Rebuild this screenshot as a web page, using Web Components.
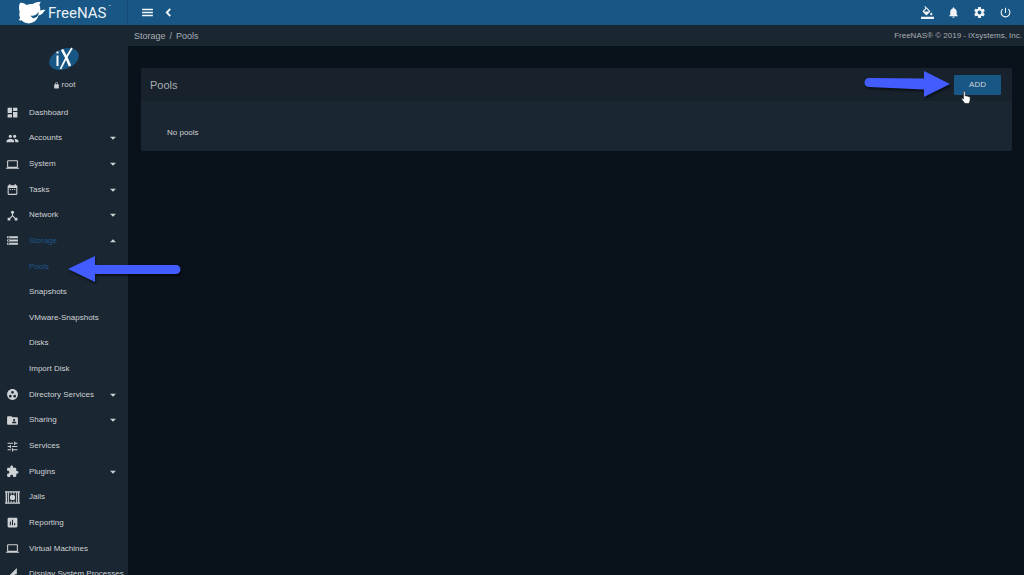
<!DOCTYPE html>
<html lang="en">
<head>
<meta charset="utf-8">
<title>FreeNAS - Pools</title>
<style>
  html { --blue: #175685; --panel: #1a2631; --panel-head: #17222c; --page: #09111a; --text: #cfd2d5; --dim: #a9adb1; }
  body { margin: 0; background: var(--page); color: var(--text); font-family: "Liberation Sans", Arial, sans-serif; font-size: 8px; line-height: 12px; overflow: hidden; }
</style>
</head>
<body>
<nas-app></nas-app>
<script>
const PATHS = {
  dashboard: 'M3 13h8V3H3v10zm0 8h8v-6H3v6zm10 0h8V11h-8v10zm0-18v6h8V3h-8z',
  people: 'M16 11c1.66 0 2.99-1.34 2.99-3S17.66 5 16 5c-1.66 0-3 1.34-3 3s1.34 3 3 3zm-8 0c1.66 0 2.99-1.34 2.99-3S9.66 5 8 5C6.34 5 5 6.34 5 8s1.34 3 3 3zm0 2c-2.33 0-7 1.17-7 3.5V19h14v-2.5c0-2.33-4.67-3.5-7-3.5zm8 0c-.29 0-.62.02-.97.05 1.16.84 1.97 1.97 1.97 3.45V19h6v-2.5c0-2.33-4.67-3.5-7-3.5z',
  laptop: 'M20 18c1.1 0 1.99-.9 1.99-2L22 6c0-1.1-.9-2-2-2H4c-1.1 0-2 .9-2 2v10c0 1.1.9 2 2 2H0v2h24v-2h-4zM4 6h16v10H4V6z',
  calendar: 'M9 11H7v2h2v-2zm4 0h-2v2h2v-2zm4 0h-2v2h2v-2zm2-7h-1V2h-2v2H8V2H6v2H5c-1.11 0-1.99.9-1.99 2L3 20c0 1.1.89 2 2 2h14c1.1 0 2-.9 2-2V6c0-1.1-.9-2-2-2zm0 16H5V9h14v11z',
  hub: 'M17 16l-4-4V8.82C14.16 8.4 15 7.3 15 6c0-1.66-1.34-3-3-3S9 4.34 9 6c0 1.3.84 2.4 2 2.82V12l-4 4H3v5h5v-3.05l4-4.2 4 4.2V21h5v-5h-4z',
  storage: 'M2 20h20v-4H2v4zm2-3h2v2H4v-2zM2 4v4h20V4H2zm4 3H4V5h2v2zm-4 7h20v-4H2v4zm2-3h2v2H4v-2z',
  group: 'M12 2C6.48 2 2 6.48 2 12s4.48 10 10 10 10-4.48 10-10S17.52 2 12 2zM8 17.5c-1.38 0-2.5-1.12-2.5-2.5s1.12-2.5 2.5-2.5 2.5 1.12 2.5 2.5-1.12 2.5-2.5 2.5zM9.5 8c0-1.38 1.12-2.5 2.5-2.5s2.5 1.12 2.5 2.5-1.12 2.5-2.5 2.5S9.5 9.38 9.5 8zm6.5 9.5c-1.38 0-2.5-1.12-2.5-2.5s1.12-2.5 2.5-2.5 2.5 1.12 2.5 2.5-1.12 2.5-2.5 2.5z',
  share: 'M20 6h-8l-2-2H4c-1.1 0-1.99.9-1.99 2L2 18c0 1.1.9 2 2 2h16c1.1 0 2-.9 2-2V8c0-1.1-.9-2-2-2zm-5 3c1.1 0 2 .9 2 2s-.9 2-2 2-2-.9-2-2 .9-2 2-2zm4 8h-8v-1c0-1.33 2.67-2 4-2s4 .67 4 2v1z',
  tune: 'M3 17v2h6v-2H3zM3 5v2h10V5H3zm10 16v-2h8v-2h-8v-2h-2v6h2zM7 9v2H3v2h4v2h2V9H7zm14 4v-2H11v2h10zm-6-4h2V7h4V5h-4V3h-2v6z',
  plugin: 'M20.5 11H19V7c0-1.1-.9-2-2-2h-4V3.5C13 2.12 11.88 1 10.5 1S8 2.12 8 3.5V5H4c-1.1 0-1.99.9-1.99 2v3.8H3.5c1.49 0 2.7 1.21 2.7 2.7s-1.21 2.7-2.7 2.7H2V20c0 1.1.9 2 2 2h3.8v-1.5c0-1.49 1.21-2.7 2.7-2.7 1.49 0 2.7 1.21 2.7 2.7V22H17c1.1 0 2-.9 2-2v-4h1.5c1.38 0 2.5-1.12 2.5-2.5S21.88 11 20.5 11z',
  jail: 'M0 2h24v2H0zM0 20h24v2H0zM1 4h2.500v16H1zM5 4h1.500v16H5zM17.500 4H19v16h-1.500zM20.500 4H23v16h-2.500zM9 4h1.500v3H9zM13.500 4H15v3h-1.500zM9 17h1.500v3H9zM13.500 17H15v3h-1.500zM9.500 8h5L16 10v4l-1.500 2h-5L8 14v-4z',
  chart: 'M19 3H5c-1.1 0-2 .9-2 2v14c0 1.1.9 2 2 2h14c1.1 0 2-.9 2-2V5c0-1.1-.9-2-2-2zM9 17H7v-7h2v7zm4 0h-2V7h2v10zm4 0h-2v-4h2v4z',
  process: 'M18.990 11.500c.34 0 .67.03 1 .07L20 0 0 20h11.560c-.04-.33-.07-.66-.07-1 0-4.140 3.360-7.500 7.500-7.500z',
  fill: 'M16.56 8.94L7.62 0 6.21 1.41l2.38 2.38-5.15 5.15c-.59.59-.59 1.54 0 2.12l5.5 5.5c.29.29.68.44 1.06.44s.77-.15 1.06-.44l5.5-5.5c.59-.58.59-1.53 0-2.12zM5.21 10L10 5.21 14.79 10H5.21zM19 11.5s-2 2.17-2 3.5c0 1.1.9 2 2 2s2-.9 2-2c0-1.33-2-3.5-2-3.5zM0 20h24v4H0z',
  bell: 'M12 22c1.1 0 2-.9 2-2h-4c0 1.1.89 2 2 2zm6-6v-5c0-3.07-1.64-5.64-4.5-6.32V4c0-.83-.67-1.5-1.5-1.5s-1.5.67-1.5 1.5v.68C7.63 5.36 6 7.92 6 11v5l-2 2v1h16v-1l-2-2z',
  gear: 'M19.43 12.98c.04-.32.07-.64.07-.98s-.03-.66-.07-.98l2.11-1.65c.19-.15.24-.42.12-.64l-2-3.46c-.12-.22-.39-.3-.61-.22l-2.49 1c-.52-.4-1.08-.73-1.69-.98l-.38-2.65C14.46 2.18 14.25 2 14 2h-4c-.25 0-.46.18-.49.42l-.38 2.65c-.61.25-1.17.59-1.69.98l-2.49-1c-.23-.09-.49 0-.61.22l-2 3.46c-.13.22-.07.49.12.64l2.11 1.65c-.04.32-.07.65-.07.98s.03.66.07.98l-2.11 1.65c-.19.15-.24.42-.12.64l2 3.46c.12.22.39.3.61.22l2.49-1c.52.4 1.08.73 1.69.98l.38 2.65c.03.24.24.42.49.42h4c.25 0 .46-.18.49-.42l.38-2.65c.61-.25 1.17-.59 1.69-.98l2.49 1c.23.09.49 0 .61-.22l2-3.46c.12-.22.07-.49-.12-.64l-2.11-1.65zM12 15.5c-1.93 0-3.5-1.57-3.5-3.5s1.57-3.5 3.5-3.5 3.5 1.57 3.5 3.5-1.57 3.5-3.5 3.5z',
  power: 'M13 3h-2v10h2V3zm4.83 2.17l-1.42 1.42C17.99 7.86 19 9.81 19 12c0 3.87-3.13 7-7 7s-7-3.13-7-7c0-2.19 1.01-4.14 2.58-5.42L6.17 5.17C4.23 6.82 3 9.26 3 12c0 4.97 4.03 9 9 9s9-4.03 9-9c0-2.74-1.23-5.18-3.17-6.83z',
  lock: 'M18 8h-1V6c0-2.76-2.24-5-5-5S7 3.24 7 6v2H6c-1.1 0-2 .9-2 2v10c0 1.1.9 2 2 2h12c1.1 0 2-.9 2-2V10c0-1.1-.9-2-2-2zm-2.900 0H8.900V6c0-1.710 1.390-3.100 3.100-3.100s3.100 1.390 3.100 3.100z',
  menu: 'M2 19h20v-3H2v3zm0-5.500h20v-3H2v3zM2 5v3h20V5H2z',
  back: 'M16.500 6.500 14 4 6.500 12l7.500 8 2.500-2.500L11.500 12z',
  down: 'M5 9l7 7 7-7z',
  up: 'M5 15l7-7 7 7z'
};

class NasElement extends HTMLElement {
  constructor() { super(); this.attachShadow({ mode: 'open' }); }
  connectedCallback() { this.shadowRoot.innerHTML = this.render(); }
  attr(name) { return this.getAttribute(name) || ''; }
}

customElements.define('nas-icon', class extends NasElement {
  render() {
    return `<style>:host{display:block;flex:none;width:13px;height:13px}svg{display:block;width:100%;height:100%;fill:currentColor}</style>
    <svg viewBox="0 0 24 24" aria-hidden="true"><path fill-rule="evenodd" d="${PATHS[this.attr('name')]}"/></svg>`;
  }
});

customElements.define('nas-brand', class extends NasElement {
  render() {
    return `<style>
      :host{display:flex;box-sizing:border-box;width:128px;height:100%;border-right:1px solid #124a75}
      a{display:flex;align-items:center;gap:2px;padding-left:18px;color:#e9f0f5;text-decoration:none;font:400 15px/24px Roboto,sans-serif}
      svg{width:28px;height:24px;flex:none}
      sup{font-size:4px;line-height:4px;align-self:flex-start;margin-top:5px}
    </style>
    <a href="#home"><svg viewBox="0 0 28 24" aria-hidden="true">
      <path fill="#fff" d="M2 2C4 1.500 6.500 2.500 8.500 4 11 3 13 2.800 14.500 3 17 1.500 20 1 23 .8c-1 1-1.500 2-1.500 3.500.8 1.800 1 3.500.6 5.300 1.800-.8 3.900-1 5.400-.6-1.200.9-1.800 2.200-3 3.400-1.500 1.300-3 1.700-4.100 2.200-1 3.800-3.700 7-8.400 7.700-3.500.4-6.500-.8-8.500-3-1 .4-2.200.2-3-.3 1-.6 1.500-1.400 1.500-2.400-.8-2-1-3.800-.3-5.800C.8 8.500.6 4.500 2 2z"/>
      <path fill="#175685" d="M12.500 14.500c3.200 1 6-.5 8-3.500.6 3-1.700 6-5.300 6.200-1.300-.6-2.200-1.500-2.700-2.700z"/>
    </svg><span>FreeNAS</span><sup>™</sup></a>`;
  }
});

customElements.define('nas-icon-button', class extends NasElement {
  render() {
    return `<style>:host{display:block;flex:none}button{display:block;border:0;padding:0;background:none;color:#f2f5f7;cursor:pointer}</style>
    <button type="button" aria-label="${this.attr('label')}"><nas-icon name="${this.attr('icon')}"></nas-icon></button>`;
  }
});

customElements.define('nas-topbar', class extends NasElement {
  render() {
    return `<style>
      :host{display:flex;align-items:center;height:25px;background:var(--blue)}
      .left{display:flex;gap:8px;padding-left:13px;flex:1}
      .right{display:flex;gap:13px;padding-right:12px}
    </style>
    <nas-brand></nas-brand>
    <div class="left"><nas-icon-button icon="menu" label="Toggle menu"></nas-icon-button><nas-icon-button icon="back" label="Collapse menu"></nas-icon-button></div>
    <div class="right"><nas-icon-button icon="fill" label="Theme"></nas-icon-button><nas-icon-button icon="bell" label="Notifications"></nas-icon-button><nas-icon-button icon="gear" label="Settings"></nas-icon-button><nas-icon-button icon="power" label="Power"></nas-icon-button></div>`;
  }
});

customElements.define('nas-user', class extends NasElement {
  render() {
    return `<style>
      :host{display:flex;flex-direction:column;align-items:center;gap:8px;height:75px;padding-top:21px;box-sizing:border-box}
      svg{width:32px;height:25px}
      div{display:flex;align-items:center;gap:2px;line-height:12px}
      nas-icon{width:7px;height:7px}
    </style>
    <svg viewBox="0 0 32 25" role="img" aria-label="iX">
      <ellipse cx="16" cy="13" rx="15.500" ry="10" fill="var(--blue)" transform="rotate(-22 16 13)"/>
      <g fill="none" stroke="#fff"><path stroke-width="2" d="M9.500 9.500V20M9.500 5.500v2"/><path stroke-width="2.500" d="M14 3.500Q19 12 22 20"/><path stroke-width="1.800" d="M24 2Q18 11 12.500 23"/></g>
    </svg>
    <div><nas-icon name="lock"></nas-icon><span>root</span></div>`;
  }
});

customElements.define('nas-nav-item', class extends NasElement {
  render() {
    const sub = this.hasAttribute('sub'), icon = this.attr('icon'), arrow = this.attr('arrow');
    return `<style>
      :host{display:grid}
      a{display:flex;align-items:center;padding:0 10px 0 6px;color:inherit;text-decoration:none;white-space:nowrap}
      a.sub{padding-left:29px}
      span{flex:1}
      .lead{margin-right:10px}
      .lead[name=jail]{width:15px;height:15px;margin:0 9px 0 -1px}
      .arrow{width:10px;height:10px}
      :host([active]) span{color:#1c568a}
    </style>
    <a href="#" class="${sub ? 'sub' : ''}">${icon ? `<nas-icon class="lead" name="${icon}"></nas-icon>` : ''}<span><slot></slot></span>${arrow ? `<nas-icon class="arrow" name="${arrow}"></nas-icon>` : ''}</a>`;
  }
});

customElements.define('nas-sidebar', class extends NasElement {
  render() {
    return `<style>
      :host{display:block;background:var(--panel);overflow:hidden}
      nav{display:grid;grid-template-columns:minmax(0,1fr);grid-auto-rows:1fr;height:487px}
    </style>
    <nas-user></nas-user>
    <nav>
      <nas-nav-item icon="dashboard">Dashboard</nas-nav-item>
      <nas-nav-item icon="people" arrow="down">Accounts</nas-nav-item>
      <nas-nav-item icon="laptop" arrow="down">System</nas-nav-item>
      <nas-nav-item icon="calendar" arrow="down">Tasks</nas-nav-item>
      <nas-nav-item icon="hub" arrow="down">Network</nas-nav-item>
      <nas-nav-item icon="storage" arrow="up" active>Storage</nas-nav-item>
      <nas-nav-item sub active>Pools</nas-nav-item>
      <nas-nav-item sub>Snapshots</nas-nav-item>
      <nas-nav-item sub>VMware-Snapshots</nas-nav-item>
      <nas-nav-item sub>Disks</nas-nav-item>
      <nas-nav-item sub>Import Disk</nas-nav-item>
      <nas-nav-item icon="group" arrow="down">Directory Services</nas-nav-item>
      <nas-nav-item icon="share" arrow="down">Sharing</nas-nav-item>
      <nas-nav-item icon="tune">Services</nas-nav-item>
      <nas-nav-item icon="plugin" arrow="down">Plugins</nas-nav-item>
      <nas-nav-item icon="jail">Jails</nas-nav-item>
      <nas-nav-item icon="chart">Reporting</nas-nav-item>
      <nas-nav-item icon="laptop">Virtual Machines</nas-nav-item>
      <nas-nav-item icon="process">Display System Processes</nas-nav-item>
    </nav>`;
  }
});

customElements.define('nas-breadcrumb', class extends NasElement {
  render() {
    return `<style>
      :host{display:flex;align-items:center;justify-content:space-between;height:21px;padding:0 2px 0 6px;background:var(--panel);color:var(--dim)}
      nav{display:flex;gap:4px;font-size:9px}
      a{color:inherit;text-decoration:none}
    </style>
    <nav aria-label="Breadcrumb"><a href="#storage">Storage</a><span>/</span><a href="#pools">Pools</a></nav>
    <span>FreeNAS® © 2019 - iXsystems, Inc.</span>`;
  }
});

customElements.define('nas-arrow', class extends NasElement {
  render() {
    const d = this.attr('to') === 'left'
      ? 'M4 15 31 2v9h81a4.500 4.500 0 0 1 0 9H31v8z'
      : 'M7 9 62 9.500V2L88 15 62 28V20.500L7 18a4.500 4.500 0 0 1 0-9z';
    return `<style>:host{display:block;pointer-events:none}svg{display:block;overflow:visible;filter:drop-shadow(1px 2px 1px #0008)}</style>
    <svg width="118" height="30" aria-hidden="true"><path fill="#425cff" d="${d}"/></svg>`;
  }
});

customElements.define('nas-card', class extends NasElement {
  render() {
    return `<style>
      :host{display:block;background:var(--panel);border-radius:2px}
      header{display:flex;align-items:center;justify-content:space-between;height:33px;padding:0 11px 0 9px;background:var(--panel-head);border-radius:2px 2px 0 0}
      h1{margin:0;font-size:11px;line-height:16px;font-weight:400;color:var(--dim)}
      .body{padding:26px 26px 12px}
    </style>
    <header><h1><slot name="title"></slot></h1><slot name="action"></slot></header>
    <div class="body"><slot></slot></div>`;
  }
});

customElements.define('nas-add-button', class extends NasElement {
  render() {
    return `<style>
      :host{display:block;position:relative}
      button{display:block;width:47px;height:20px;padding:0;border:0;border-radius:1px;background:var(--blue);color:var(--text);font:inherit;cursor:pointer}
      nas-arrow{position:absolute;left:-92px;top:-6px}
      .hand{position:absolute;left:7px;top:16px;width:10px;height:13px}
    </style>
    <button type="button"><slot></slot></button>
    <nas-arrow to="right"></nas-arrow>
    <svg class="hand" viewBox="0 0 10 13" aria-hidden="true"><path fill="#fff" stroke="#222" stroke-width=".6" d="M2.500 1.200c0-1.200 1.700-1.200 1.700 0V5c.5-.5 1.500-.4 1.700.3.600-.4 1.400-.2 1.600.5.800-.3 1.600.1 1.600 1v2.500L8 12.500H4L1 8.700C.1 7.500 1.300 6.700 2.500 8z"/></svg>`;
  }
});

customElements.define('nas-app', class extends NasElement {
  render() {
    return `<style>
      :host{display:grid;grid-template:auto minmax(0,1fr)/128px minmax(0,1fr);height:100vh;position:relative}
      nas-topbar{grid-column:1/-1}
      nas-card{margin:22px 12px 0 13px}
      .note{position:absolute;left:64px;top:254px}
    </style>
    <nas-topbar></nas-topbar>
    <nas-sidebar></nas-sidebar>
    <main>
      <nas-breadcrumb></nas-breadcrumb>
      <nas-card><span slot="title">Pools</span><nas-add-button slot="action">ADD</nas-add-button>No pools</nas-card>
    </main>
    <nas-arrow class="note" to="left"></nas-arrow>`;
  }
});
</script>
</body>
</html>
